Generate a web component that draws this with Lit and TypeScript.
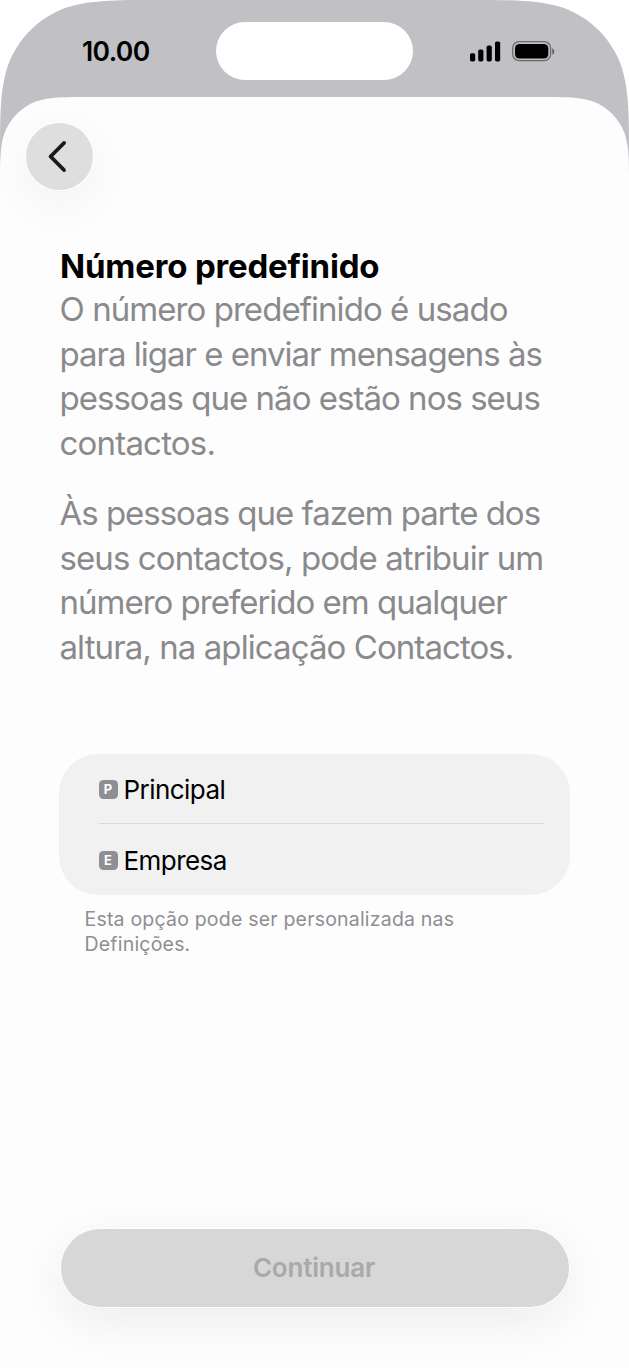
import { css, html, LitElement, svg, TemplateResult } from "lit";
import { customElement, property, state } from "lit/decorators.js";
import { styleMap } from "lit/directives/style-map.js";

/**
 * A line of text with its own tracking, in pixels
 */
interface Line {
  text: string;
  tracking: number;
}

interface Plan {
  badge: string;
  name: string;
  tracking: number;
}

const paragraphs: Line[][] = [
  [
    { text: "O número predefinido é usado", tracking: -0.94 },
    { text: "para ligar e enviar mensagens às", tracking: -1 },
    { text: "pessoas que não estão nos seus", tracking: -0.98 },
    { text: "contactos.", tracking: -0.8 },
  ],
  [
    { text: "Às pessoas que fazem parte dos", tracking: -1.02 },
    { text: "seus contactos, pode atribuir um", tracking: -0.9 },
    { text: "número preferido em qualquer", tracking: -1 },
    { text: "altura, na aplicação Contactos.", tracking: -0.92 },
  ],
];

const footnote: Line[] = [
  { text: "Esta opção pode ser personalizada nas", tracking: 0.2 },
  { text: "Definições.", tracking: 0.2 },
];

const plans: Plan[] = [
  { badge: "P", name: "Principal", tracking: -0.55 },
  { badge: "E", name: "Empresa", tracking: -0.55 },
];

function buildLine(line: Line): TemplateResult {
  return html`<span
    class="line"
    style=${styleMap({ letterSpacing: `${line.tracking}px` })}
    >${line.text}</span
  >`;
}

/**
 * Status bar with the clock, the island and the indicators.
 */
@customElement("status-bar")
export class StatusBar extends LitElement {
  @property()
  time = "";

  static styles = css`
    :host {
      display: grid;
      grid-template-columns: 216px 197px 1fr;
      height: 97px;
      box-sizing: border-box;
      padding-top: 21.5px;
      align-items: start;
    }
    .time {
      padding-left: 82px;
      font-size: 26.5px;
      line-height: 58px;
      font-weight: 600;
      letter-spacing: -0.6px;
    }
    .island {
      height: 58px;
      border-radius: 29px;
      background: #fff;
    }
    .indicators {
      display: block;
      margin-left: 56px;
      margin-top: 18px;
    }
  `;

  render() {
    return html`
      <div class="time">${this.time}</div>
      <div class="island"></div>
      <svg class="indicators" width="88" height="24" viewBox="0 0 88 24">
        ${[
          [1, 13.2],
          [9.2, 9.6],
          [17.6, 5.5],
          [26, 1.5],
        ].map(
          ([x, y]) =>
            svg`<rect x=${x} y=${y} width="5.2" height=${21.5 - y} rx="1.7" />`
        )}
        <rect
          x="43.7"
          y="1.7"
          width="37.9"
          height="19"
          rx="6.4"
          fill="none"
          stroke="#000"
          stroke-opacity="0.45"
          stroke-width="1.3"
        />
        <rect x="46" y="4" width="33.3" height="14.4" rx="4.3" />
        <path d="M83.3 8.2v6.4c1.2-.6 2-1.8 2-3.2s-.8-2.6-2-3.2z" opacity="0.5" />
      </svg>
    `;
  }
}

/**
 * Setup sheet for the default line.
 */
@customElement("app-root")
export class AppRoot extends LitElement {
  @state()
  plans: Plan[] = plans;

  static styles = css`
    :host {
      display: block;
      width: 629px;
      height: 1368px;
      overflow: hidden;
      background: #fff;
      color: #000;
      font-family: Inter, "Liberation Sans", sans-serif;
    }
    .screen {
      height: 1368px;
      background: #c1c0c5;
      clip-path: path(
        "M0 1368V159C0 113.2 0 90.3 7.8 65.7C17.6 38.8 38.8 17.6 65.7 7.8C90.3 0 113.2 0 159 0H470C515.8 0 538.7 0 563.3 7.8C590.2 17.6 611.4 38.8 621.2 65.7C629 90.3 629 113.2 629 159V1368Z"
      );
    }
    .sheet {
      display: flex;
      flex-direction: column;
      height: 1271px;
      box-sizing: border-box;
      padding: 26px 60px 61px;
      background: #fdfdfd;
      clip-path: path(
        "M0 1271V88.7C0 63.1 0 50.4 4.3 36.6C9.8 21.6 21.6 9.8 36.6 4.3C50.4 0 63.1 0 88.7 0H540.3C565.9 0 578.6 0 592.4 4.3C607.4 9.8 619.2 21.6 624.7 36.6C629 50.4 629 63.1 629 88.7V1271Z"
      );
    }
    button {
      border: none;
      padding: 0;
      font: inherit;
    }
    .back {
      display: grid;
      place-items: center;
      width: 66.5px;
      height: 66.5px;
      margin-left: -34px;
      flex: none;
      border-radius: 50%;
      background: #dedede;
      box-shadow: 0 0 0 1px rgba(255, 255, 255, 0.8),
        0 14px 50px rgba(0, 0, 0, 0.05);
    }
    h1 {
      margin: 54px 0 0;
      font-size: 33px;
      line-height: 44px;
      font-weight: 700;
      letter-spacing: -0.18px;
    }
    .line {
      display: block;
      width: max-content;
      white-space: nowrap;
    }
    p {
      margin: 0 0 0 -0.5px;
      font-size: 33px;
      line-height: 44.5px;
      color: #8a8a8c;
    }
    h1 + p {
      margin-top: -0.5px;
    }
    p + p {
      margin-top: 26px;
    }
    ul {
      display: block;
      list-style: none;
      margin: 84.5px -0.5px 0 -1px;
      padding: 0 26px 0 39.5px;
      height: 141px;
      flex: none;
      box-sizing: border-box;
      border-radius: 39px;
      background: #f1f1f1;
    }
    li {
      display: flex;
      align-items: center;
      box-sizing: border-box;
      height: 69px;
      padding-top: 3px;
      gap: 6px;
      font-size: 26px;
    }
    li + li {
      height: 72px;
      padding-top: 3px;
      border-top: 1.5px solid #dadadc;
    }
    .badge {
      width: 19px;
      height: 18.5px;
      border-radius: 4.5px;
      background: #8e8e93;
      color: #fff;
      font-size: 13px;
      line-height: 19px;
      font-weight: 700;
      text-align: center;
    }
    .note {
      margin: 12px 0 0 24.5px;
      font-size: 19.5px;
      line-height: 25px;
      color: #8e8e93;
    }
    .continue {
      height: 78px;
      margin: auto 0.5px 0 1px;
      padding-right: 1.5px;
      border-radius: 39px;
      background: #d7d7d7;
      color: #a9a9ab;
      font-size: 26px;
      font-weight: 600;
      letter-spacing: -0.2px;
      line-height: 76px;
      box-shadow: 0 0 0 1px rgba(255, 255, 255, 0.7),
        0 14px 50px rgba(0, 0, 0, 0.07);
    }
  `;

  render() {
    return html`
      <div class="screen">
        <status-bar time="10.00"></status-bar>
        <main class="sheet">
          <button class="back" aria-label="Voltar">
            <svg width="30" height="36" viewBox="0 0 30 36">
              <path
                d="M20 5L6.6 18.5L20 32"
                fill="none"
                stroke="#1a1a1a"
                stroke-width="3.9"
                stroke-linecap="round"
                stroke-linejoin="round"
              />
            </svg>
          </button>
          <h1>Número predefinido</h1>
          ${paragraphs.map((lines) => html`<p>${lines.map(buildLine)}</p>`)}
          <ul>
            ${this.plans.map(
              (plan) => html`
                <li>
                  <span class="badge">${plan.badge}</span>
                  ${buildLine({ text: plan.name, tracking: plan.tracking })}
                </li>
              `
            )}
          </ul>
          <div class="note">${footnote.map(buildLine)}</div>
          <button class="continue" disabled>Continuar</button>
        </main>
      </div>
    `;
  }
}
